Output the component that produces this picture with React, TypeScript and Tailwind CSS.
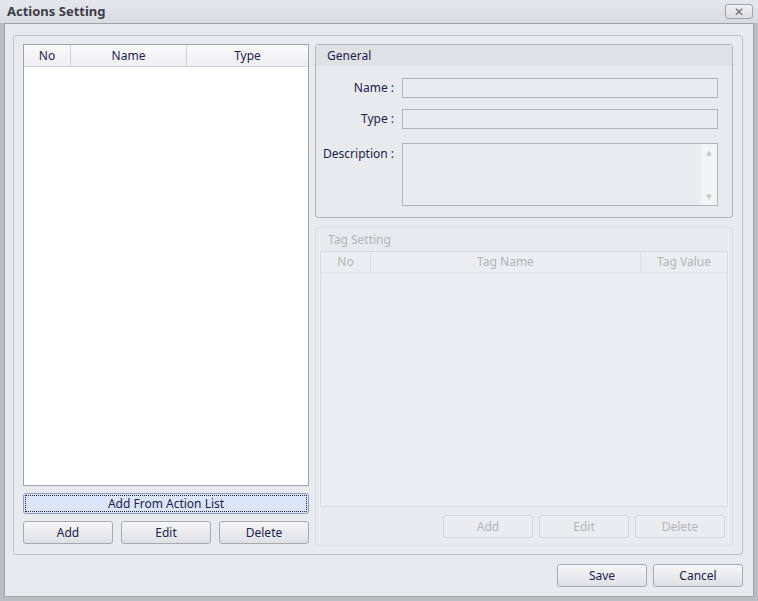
import React from "react";

const font = { fontFamily: '"Noto Sans", "DejaVu Sans", sans-serif' };

function Btn({ label, disabled, className = "" }: { label: string; disabled?: boolean; className?: string }) {
  return (
    <button
      className={
        "h-[23px] w-[90px] rounded-[3px] border text-[12px] leading-none " +
        (disabled
          ? "border-[#d3d4d9] bg-[#ebecef] text-[#b4b5bb] "
          : "border-[#a8a9b0] bg-gradient-to-b from-[#f7f7f9] to-[#dfe0e4] text-[#1d2150] ") +
        className
      }
    >
      {label}
    </button>
  );
}

function Field({ label, tall }: { label: string; tall?: boolean }) {
  return (
    <div className="flex">
      <div className={"w-[80px] pr-[2px] text-right text-[12px] text-[#1d2150] " + (tall ? "pt-[2px]" : "pt-[1px]")}>
        {label} :
      </div>
      <div
        className={
          "ml-[6px] w-[316px] border border-[#b3b4bb] bg-[#ebecef] " + (tall ? "flex h-[63px] justify-end" : "h-[20px]")
        }
      >
        {tall && (
          <div className="flex w-[16px] flex-col items-center justify-between bg-[#f3f4f6] py-[5px] text-[7px] leading-none text-[#c6c7cc]">
            <span>▲</span>
            <span>▼</span>
          </div>
        )}
      </div>
    </div>
  );
}

export default function App() {
  return (
    <div style={font} className="flex h-[601px] w-[758px] flex-col bg-[#bcbdc4]">
      {/* Title bar */}
      <div className="flex h-[23px] items-center justify-between bg-gradient-to-b from-[#e6e7eb] to-[#dadbe0] pl-[7px] pr-[5px]">
        <span className="text-[13px] font-bold text-[#3c3e4a]">Actions Setting</span>
        <div className="flex h-[15px] w-[28px] items-center justify-center rounded-[3px] border border-[#a3a4ab] bg-gradient-to-b from-[#f1f1f3] to-[#dcdde1] text-[12px] font-black leading-none text-[#6c6e78]">
          ✕
        </div>
      </div>

      {/* Body */}
      <div className="ml-[4px] mr-[4px] mb-[4px] flex flex-1 flex-col border border-[#a0a1a9] bg-[#e9eaee] pl-[8px] pr-[10px] pt-[11px]">
        <div className="flex h-[520px] rounded-[3px] border border-[#c2c3ca] pl-[9px] pr-[9px] pt-[8px]">
          {/* Left column */}
          <div className="flex w-[286px] flex-col">
            <div className="h-[442px] border border-[#9fa0a8] bg-white">
              <div className="flex h-[22px] border-b border-[#cfd0d6] bg-gradient-to-b from-[#fafafb] to-[#eeeff2] text-[12px] text-[#1d2150]">
                <div className="flex w-[47px] items-center justify-center border-r border-[#cfd0d6]">No</div>
                <div className="flex w-[116px] items-center justify-center border-r border-[#cfd0d6]">Name</div>
                <div className="flex flex-1 items-center justify-center">Type</div>
              </div>
            </div>
            <div className="mt-[7px] flex h-[21px] items-center justify-center rounded-[3px] border border-[#8e9fc4] bg-[#dce6fb] p-[1px]">
              <div className="flex h-full w-full items-center justify-center border border-dotted border-[#20204a] text-[12px] leading-none text-[#1d2150]">
                Add From Action List
              </div>
            </div>
            <div className="mt-[7px] flex justify-between">
              <Btn label="Add" />
              <Btn label="Edit" />
              <Btn label="Delete" />
            </div>
          </div>

          {/* Right column */}
          <div className="ml-[6px] flex flex-1 flex-col">
            <div className="h-[174px] rounded-[3px] border border-[#b5b6bd]">
              <div className="flex h-[21px] items-center bg-[#e0e1e5] pl-[11px] text-[12px] text-[#1d2150]">General</div>
              <div className="flex flex-col gap-[11px] pt-[12px]">
                <Field label="Name" />
                <Field label="Type" />
                <div className="mt-[3px]">
                  <Field label="Description" tall />
                </div>
              </div>
            </div>

            <div className="mt-[9px] flex h-[319px] flex-col rounded-[3px] border border-[#dcdde2] px-[4px]">
              <div className="flex h-[23px] items-center pl-[8px] text-[12px] text-[#b3b4ba]">Tag Setting</div>
              <div className="h-[256px] border border-[#d9dadf] bg-[#ecedf0]">
                <div className="flex h-[21px] border-b border-[#dfe0e4] text-[12px] text-[#b3b4ba]">
                  <div className="flex w-[50px] items-center justify-center border-r border-[#dfe0e4]">No</div>
                  <div className="flex w-[270px] items-center justify-center border-r border-[#dfe0e4]">Tag Name</div>
                  <div className="flex flex-1 items-center justify-center">Tag Value</div>
                </div>
              </div>
              <div className="mt-[8px] flex justify-end gap-[6px] pr-[3px]">
                <Btn label="Add" disabled className="h-[22px]" />
                <Btn label="Edit" disabled className="h-[22px]" />
                <Btn label="Delete" disabled className="h-[22px]" />
              </div>
            </div>
          </div>
        </div>

        <div className="mt-[9px] flex justify-end gap-[6px]">
          <Btn label="Save" />
          <Btn label="Cancel" />
        </div>
      </div>
    </div>
  );
}
